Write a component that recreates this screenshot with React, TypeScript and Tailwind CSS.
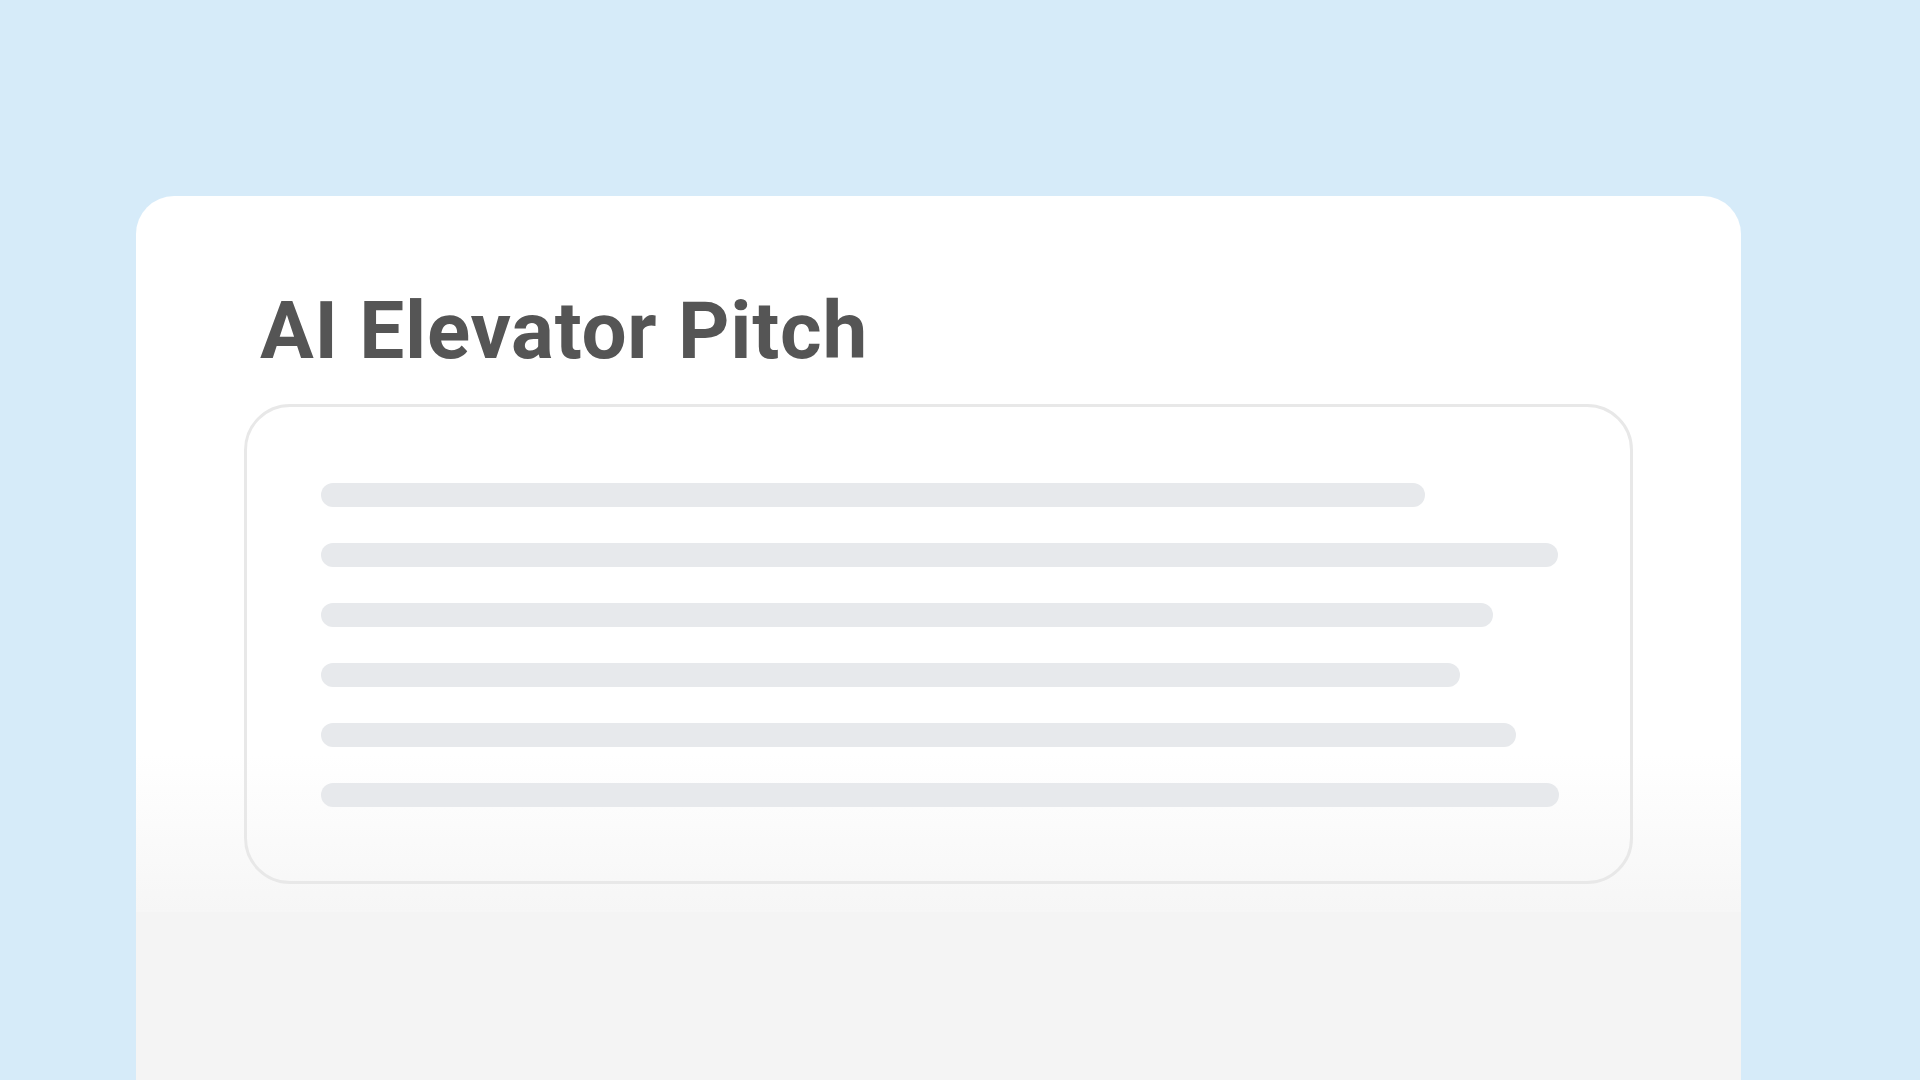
const lines = [1104, 1237, 1172, 1139, 1195, 1238];

export default function App() {
  return (
    <div className="w-[1920px] h-[1080px] overflow-hidden bg-[#d6ebf9] pt-[196px] pl-[136px]">
      <div className="w-[1605px] h-[884px] flex flex-col rounded-t-[38px] overflow-hidden">
        <div className="h-[716px] flex flex-col pt-[95px] px-[108px] bg-[linear-gradient(to_bottom,#ffffff_0%,#ffffff_78%,#f6f6f6_100%)]">
          <h1
            className="pl-[16px] text-[80px] leading-none font-bold tracking-[0.75px] text-[#555555]"
            style={{ fontFamily: 'Roboto, "Liberation Sans", sans-serif' }}
          >
            AI Elevator Pitch
          </h1>
          <div className="mt-[33px] h-[480px] rounded-[46px] border-[3px] border-[#e8e8e8] pt-[76px] pl-[74px] flex flex-col gap-[36px]">
            {lines.map((w, i) => (
              <div
                key={i}
                className="h-[24px] rounded-full bg-[#e7e9ec]"
                style={{ width: w }}
              />
            ))}
          </div>
        </div>
        <div className="flex-1 bg-[#f4f4f4]" />
      </div>
    </div>
  );
}
